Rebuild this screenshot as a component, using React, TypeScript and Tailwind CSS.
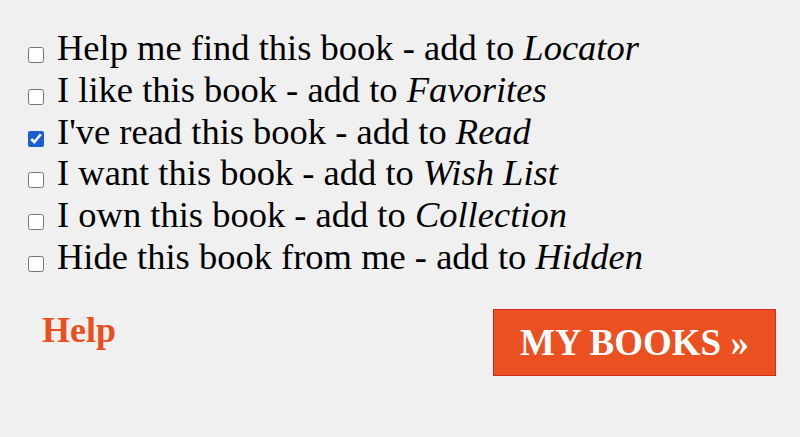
import React, { useState } from 'react';

type Shelf = { label: string; list: string; checked: boolean };

const shelves: Shelf[] = [
  { label: 'Help me find this book - add to ', list: 'Locator', checked: false },
  { label: 'I like this book - add to ', list: 'Favorites', checked: false },
  { label: "I've read this book - add to ", list: 'Read', checked: true },
  { label: 'I want this book - add to ', list: 'Wish List', checked: false },
  { label: 'I own this book - add to ', list: 'Collection', checked: false },
  { label: 'Hide this book from me - add to ', list: 'Hidden', checked: false },
];

export default function App() {
  const [checked, setChecked] = useState(shelves.map(s => s.checked));

  return (
    <div className="min-h-[437px] bg-[#f0f0f0] text-black font-['Liberation_Serif',serif]">
      {/* Shelf checkboxes */}
      <ul className="pt-[27px] pl-[28px]">
        {shelves.map((s, i) => (
          <li key={s.list} className="flex items-start h-[41.8px] text-[36.5px] leading-[42px]">
            <input
              type="checkbox"
              checked={checked[i]}
              onChange={() => setChecked(c => c.map((v, j) => (j === i ? !v : v)))}
              className="mt-[20px] mr-[13px] w-[16px] h-[16px] shrink-0 accent-[#1a5fd0]"
            />
            <span className="whitespace-nowrap">
              {s.label}
              <i>{s.list}</i>
            </span>
          </li>
        ))}
      </ul>

      {/* Footer actions */}
      <div className="flex items-start justify-between mt-[31px] pl-[42px] pr-[24px]">
        <a href="#" className="mt-[4px] text-[36px] leading-[34px] font-bold text-[#e8501f]">
          Help
        </a>
        <button className="w-[283px] h-[67px] bg-[#eb5020] border border-[#d42a1c] text-white text-[37px] font-bold">
          MY BOOKS »
        </button>
      </div>
    </div>
  );
}
